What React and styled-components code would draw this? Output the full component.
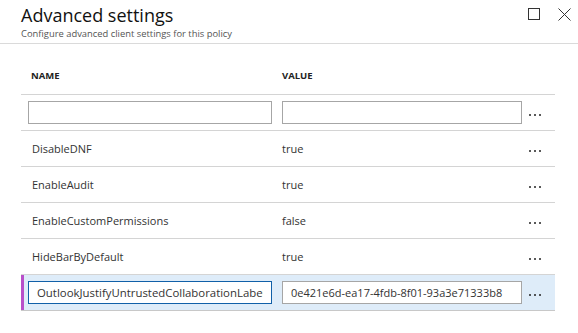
import React from "react";
import styled, { createGlobalStyle } from "styled-components";

const Global = createGlobalStyle`
  html, body { margin: 0; padding: 0; background: #fff; }
  body { font-family: "Open Sans", "Noto Sans", sans-serif; color: #333; }
  * { box-sizing: border-box; }
`;

const Page = styled.div`
  width: 578px;
  height: 333px;
  background: #fff;
  overflow: hidden;
`;

const Header = styled.header`
  display: flex;
  justify-content: space-between;
  align-items: flex-start;
  height: 44px;
  padding: 0 7px 0 21px;
  border-bottom: 1px solid #dadada;
`;

const TitleBlock = styled.div`
  display: flex;
  flex-direction: column;
`;

const Title = styled.h1`
  margin: 0;
  padding-top: 3px;
  font-size: 18px;
  font-weight: 400;
  line-height: 25px;
  color: #111;
`;

const Subtitle = styled.div`
  font-size: 9.4px;
  line-height: 12px;
  color: #555;
`;

const WindowButtons = styled.div`
  display: flex;
  gap: 17px;
  padding-top: 8px;
`;

const IconButton = styled.button`
  width: 13px;
  height: 13px;
  padding: 0;
  border: none;
  background: none;
  display: flex;
  align-items: center;
  justify-content: center;
`;

const Table = styled.div`
  margin: 0 23px 0 21px;
`;

const Row = styled.div`
  position: relative;
  display: grid;
  grid-template-columns: 256px 250px 1fr;
  align-items: center;
  height: ${(p) => (p.$head ? "51px" : "36px")};
  padding-top: ${(p) => (p.$head ? "12px" : "0")};
  border-bottom: 1px solid ${(p) => (p.$selected ? "#c8c8c8" : "#d4d4d4")};
  background: ${(p) => (p.$selected ? "#deecf9" : "transparent")};
  &::before {
    content: "";
    display: ${(p) => (p.$selected ? "block" : "none")};
    position: absolute;
    left: 0;
    top: 0;
    bottom: 0;
    width: 3px;
    background: #b84fca;
  }
`;

const HeadCell = styled.div`
  font-size: 9.5px;
  font-weight: 700;
  color: #222;
  padding-left: ${(p) => (p.$value ? "5px" : "10px")};
`;

const NameCell = styled.div`
  padding-left: ${(p) => (p.$input ? "7px" : "11px")};
  font-size: 11px;
  color: #333;
  white-space: nowrap;
  overflow: hidden;
`;

const ValueCell = styled.div`
  padding-left: 5px;
  font-size: 11px;
  color: #333;
`;

const ActionCell = styled.div`
  padding-left: 2px;
  display: flex;
  align-items: center;
  padding-top: 5px;
`;

const TextInput = styled.input`
  display: block;
  width: ${(p) => p.$w}px;
  height: 23px;
  margin: 0;
  padding: 0 8px;
  font-family: "Open Sans", "Noto Sans", sans-serif;
  font-size: ${(p) => (p.$focus ? "11.4px" : "11px")};
  color: #333;
  background: #fff;
  border: 1px solid ${(p) => (p.$focus ? "#1160a8" : "#a6a6a6")};
  outline: none;
  border-radius: 0;
`;

const Dots = styled.div`
  display: flex;
  gap: 3px;
  span {
    width: 2px;
    height: 2px;
    border-radius: 50%;
    background: #222;
  }
`;

const More = () => (
  <Dots>
    <span />
    <span />
    <span />
  </Dots>
);

const rows = [
  ["DisableDNF", "true"],
  ["EnableAudit", "true"],
  ["EnableCustomPermissions", "false"],
  ["HideBarByDefault", "true"],
];

export default function App() {
  return (
    <Page>
      <Global />
      <Header>
        <TitleBlock>
          <Title>Advanced settings</Title>
          <Subtitle>Configure advanced client settings for this policy</Subtitle>
        </TitleBlock>
        <WindowButtons>
          <IconButton aria-label="Maximize">
            <svg width="13" height="13" viewBox="0 0 13 13">
              <rect x="0.5" y="0.5" width="11" height="11" fill="none" stroke="#333" strokeWidth="1" />
            </svg>
          </IconButton>
          <IconButton aria-label="Close">
            <svg width="13" height="13" viewBox="0 0 13 13">
              <path d="M0.5 0.5 L12.5 12.5 M12.5 0.5 L0.5 12.5" stroke="#333" strokeWidth="1" />
            </svg>
          </IconButton>
        </WindowButtons>
      </Header>
      <Table>
        <Row $head>
          <HeadCell>NAME</HeadCell>
          <HeadCell $value>VALUE</HeadCell>
          <div />
        </Row>
        <Row>
          <NameCell $input>
            <TextInput $w={244} defaultValue="" />
          </NameCell>
          <ValueCell>
            <TextInput $w={240} defaultValue="" />
          </ValueCell>
          <ActionCell>
            <More />
          </ActionCell>
        </Row>
        {rows.map(([n, v]) => (
          <Row key={n}>
            <NameCell>{n}</NameCell>
            <ValueCell>{v}</ValueCell>
            <ActionCell>
              <More />
            </ActionCell>
          </Row>
        ))}
        <Row $selected>
          <NameCell $input>
            <TextInput $w={244} $focus defaultValue="OutlookJustifyUntrustedCollaborationLabel" />
          </NameCell>
          <ValueCell>
            <TextInput $w={240} defaultValue="0e421e6d-ea17-4fdb-8f01-93a3e71333b8" />
          </ValueCell>
          <ActionCell>
            <More />
          </ActionCell>
        </Row>
      </Table>
    </Page>
  );
}
